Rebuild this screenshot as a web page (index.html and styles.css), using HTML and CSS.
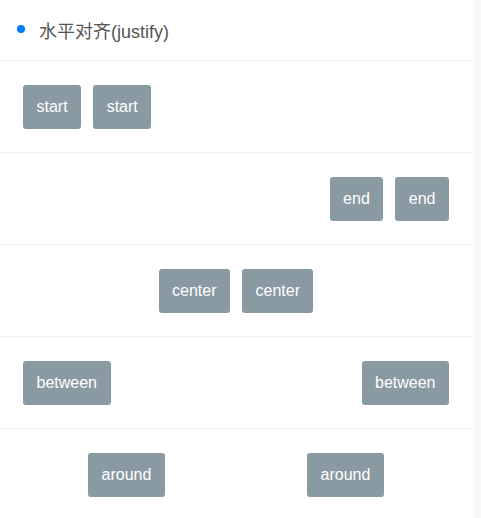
FILE: index.html
```html
<!DOCTYPE html>
<html>
<head>
<meta charset="utf-8">
<link rel="stylesheet" href="styles.css">
</head>
<body>
<div class="page">
  <main class="main">
    <div class="title">
      <span class="dot"></span>
      <span class="title-text">水平对齐(justify)</span>
    </div>
    <div class="row j-start"><span class="btn">start</span><span class="btn">start</span></div>
    <div class="row j-end"><span class="btn">end</span><span class="btn">end</span></div>
    <div class="row j-center"><span class="btn">center</span><span class="btn">center</span></div>
    <div class="row j-between"><span class="btn">between</span><span class="btn">between</span></div>
    <div class="row j-around"><span class="btn">around</span><span class="btn">around</span></div>
  </main>
  <div class="side"></div>
</div>
</body>
</html>
```

FILE: styles.css
```css
html, body {
  margin: 0;
  padding: 0;
  background: #ffffff;
}
body {
  font-family: "Liberation Sans", Arial, "Noto Sans CJK SC", sans-serif;
}
.page {
  display: flex;
  min-height: 518px;
}
.main {
  width: 473px;
  background: #ffffff;
}
.side {
  flex: 1;
  background: #f8f8f8;
}
.title {
  display: flex;
  align-items: center;
  height: 60px;
  padding-left: 17px;
  border-bottom: 1px solid #efefef;
  box-sizing: content-box;
}
.dot {
  width: 8px;
  height: 8px;
  border-radius: 50%;
  background: #007aff;
  margin-right: 14px;
  margin-top: -2px;
}
.title-text {
  font-size: 18px;
  color: #555555;
  font-family: "Liberation Sans", "Noto Sans CJK SC", sans-serif;
}
.row {
  display: flex;
  padding: 24px 18px 23px 17px;
  border-bottom: 1px solid #efefef;
}
.j-start { justify-content: flex-start; }
.j-end { justify-content: flex-end; }
.j-center { justify-content: center; }
.j-between { justify-content: space-between; }
.j-around { justify-content: space-around; border-bottom: none; }
.btn {
  display: flex;
  align-items: center;
  justify-content: center;
  height: 44px;
  padding: 0 13.5px;
  margin: 0 6px;
  background: #8a9aa3;
  color: #ffffff;
  font-size: 16px;
  border-radius: 3px;
}
```
